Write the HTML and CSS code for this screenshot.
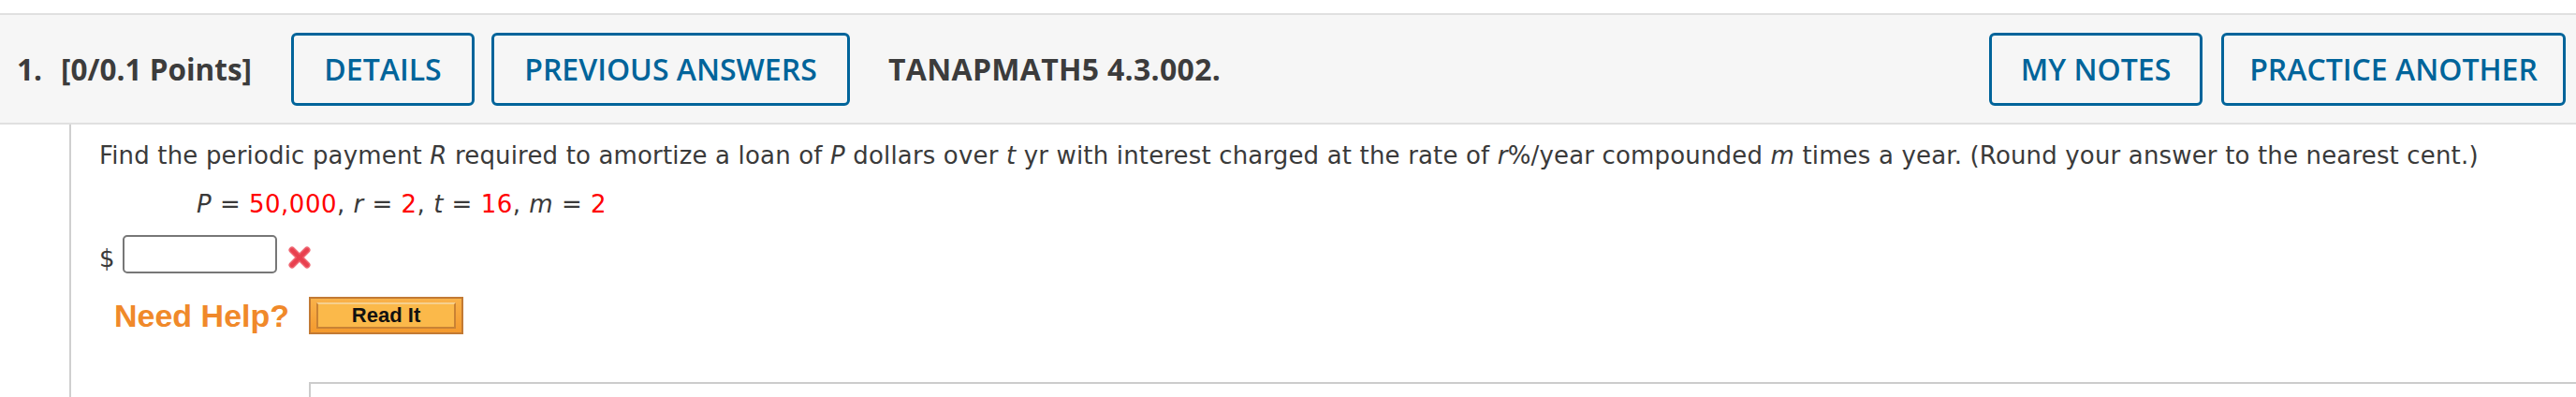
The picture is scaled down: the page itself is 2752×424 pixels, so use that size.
FILE: index.html
```html
<!DOCTYPE html>
<html>
<head>
<meta charset="utf-8">
<link rel="stylesheet" href="styles.css">
</head>
<body>
<div class="qheader">
  <span class="qnum">1.</span>
  <span class="qpoints">[0/0.1 Points]</span>
  <div class="btn-group">
    <a class="hbtn w-details">DETAILS</a>
    <a class="hbtn w-prev">PREVIOUS ANSWERS</a>
  </div>
  <span class="qid">TANAPMATH5 4.3.002.</span>
  <div class="btn-group right">
    <a class="hbtn w-notes">MY NOTES</a>
    <a class="hbtn w-practice">PRACTICE ANOTHER</a>
  </div>
</div>
<div class="qbody">
  <div class="gutter"></div>
  <div class="content">
    <p class="prompt">Find the periodic payment <i>R</i> required to amortize a loan of <i>P</i> dollars over <i>t</i> yr with interest charged at the rate of <i>r</i>%/year compounded <i>m</i> times a year. (Round your answer to the nearest cent.)</p>
    <p class="formula"><i>P</i> = <span class="val">50,000</span>, <i>r</i> = <span class="val">2</span>, <i>t</i> = <span class="val">16</span>, <i>m</i> = <span class="val">2</span></p>
    <div class="answer">
      <span class="dollar">$</span>
      <span class="ansbox"></span>
      <svg class="xmark" width="26" height="26" viewBox="0 0 26 26">
        <line x1="5" y1="5" x2="21" y2="21" stroke="#ef6470" stroke-width="7" stroke-linecap="round"/>
        <line x1="21" y1="5" x2="5" y2="21" stroke="#ef6470" stroke-width="7" stroke-linecap="round"/>
        <line x1="5" y1="5" x2="21" y2="21" stroke="#e8404f" stroke-width="4" stroke-linecap="round"/>
        <line x1="21" y1="5" x2="5" y2="21" stroke="#e8404f" stroke-width="4" stroke-linecap="round"/>
      </svg>
    </div>
    <div class="help">
      <span class="needhelp">Need Help?</span>
      <span class="readit"><span class="readit-inner">Read It</span></span>
    </div>
    <div class="nextbox"></div>
  </div>
</div>
</body>
</html>
```
FILE: styles.css
```css
html, body {
  margin: 0;
  padding: 0;
  background: #ffffff;
  overflow: hidden;
}
body {
  width: 2752px;
  height: 424px;
}
.qheader {
  margin-top: 14px;
  height: 115px;
  background: #f6f6f6;
  border-top: 2px solid #e0e0e0;
  border-bottom: 2px solid #e0e0e0;
  display: flex;
  align-items: center;
  padding: 0 11px 0 18px;
  font-family: "Open Sans", "DejaVu Sans", sans-serif;
  color: #3c3c3c;
}
.qnum {
  font-size: 31.5px;
  font-weight: 700;
  width: 47px;
}
.qpoints {
  font-size: 31.5px;
  font-weight: 700;
}
.btn-group {
  display: flex;
  gap: 18px;
  margin-left: 42px;
}
.btn-group.right {
  margin-left: auto;
  gap: 20px;
}
.hbtn {
  display: flex;
  align-items: center;
  justify-content: center;
  box-sizing: border-box;
  height: 78px;
  border: 3px solid #00649a;
  border-radius: 6px;
  color: #00649a;
  font-size: 32px;
  font-weight: 600;
}
.w-details { width: 196px; }
.w-prev { width: 383px; }
.w-notes { width: 228px; }
.w-practice { width: 368px; }
.qid {
  margin-left: 41px;
  font-size: 32px;
  font-weight: 700;
  letter-spacing: 0.3px;
}
.qbody {
  display: flex;
}
.gutter {
  width: 74px;
  flex: none;
  border-right: 2px solid #cfcfcf;
  height: 300px;
}
.content {
  flex: 1;
  padding: 15px 0 0 30px;
  font-family: "DejaVu Sans", Verdana, sans-serif;
  font-size: 26px;
  letter-spacing: 0.16px;
  color: #3a3a3a;
}
.prompt {
  margin: 0;
  line-height: 36px;
  white-space: nowrap;
}
.formula {
  margin: 16px 0 0 0;
  padding-left: 104px;
  line-height: 36px;
  letter-spacing: 0.5px;
}
.val {
  color: #ff0000;
}
.answer {
  margin-top: 15px;
  display: flex;
  align-items: center;
  height: 41px;
}
.dollar {
  width: 25px;
  line-height: 36px;
  margin-top: 8px;
}
.ansbox {
  box-sizing: border-box;
  width: 165px;
  height: 41px;
  border: 2px solid #777777;
  border-radius: 5px;
  background: #ffffff;
}
.xmark {
  margin-left: 11px;
  margin-top: 6px;
}
.help {
  margin-top: 25px;
  display: flex;
  align-items: center;
  height: 40px;
  padding-left: 16px;
}
.needhelp {
  font-family: "Liberation Sans", Arial, sans-serif;
  font-weight: 700;
  font-size: 34px;
  letter-spacing: 0;
  color: #f0892a;
}
.readit {
  margin-left: 21px;
  box-sizing: border-box;
  width: 165px;
  height: 40px;
  border: 2px solid #c27a34;
  background: linear-gradient(#f9b24a, #f49a2e);
  padding: 4px 6px;
  display: flex;
}
.readit-inner {
  flex: 1;
  border: 2px solid #c98234;
  border-top-color: #f6d08e;
  background: #fbb94a;
  display: flex;
  align-items: center;
  justify-content: center;
  font-family: "Liberation Sans", Arial, sans-serif;
  font-weight: 700;
  font-size: 22px;
  letter-spacing: 0;
  color: #111111;
}
.nextbox {
  margin: 51px 0 0 224px;
  height: 60px;
  border: 2px solid #cccccc;
  border-right: none;
  border-bottom: none;
}
```
